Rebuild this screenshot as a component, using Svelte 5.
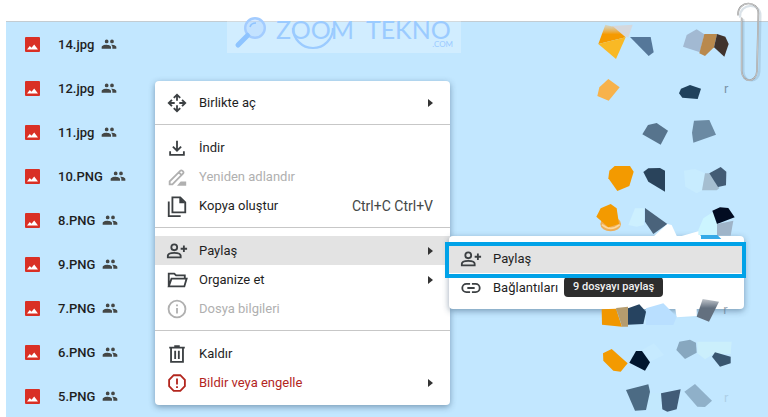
<script>
    const files = ['14.jpg', '12.jpg', '11.jpg', '10.PNG', '8.PNG', '9.PNG', '7.PNG', '6.PNG', '5.PNG'];

    const groups = [
        [{ label: 'Birlikte aç', icon: 'move', sub: true }],
        [
            { label: 'İndir', icon: 'download' },
            { label: 'Yeniden adlandır', icon: 'rename', disabled: true },
            { label: 'Kopya oluştur', icon: 'copy', keys: 'Ctrl+C Ctrl+V' }
        ],
        [
            { label: 'Paylaş', icon: 'share', sub: true, active: true },
            { label: 'Organize et', icon: 'folder', sub: true },
            { label: 'Dosya bilgileri', icon: 'info', disabled: true }
        ],
        [
            { label: 'Kaldır', icon: 'trash' },
            { label: 'Bildir veya engelle', icon: 'report', sub: true, danger: true }
        ]
    ];
</script>

{#snippet icon(name)}
    <svg class="icon" viewBox="0 0 24 24" aria-hidden="true">
        {#if name === 'move'}
            <path d="M12 3v6.500M12 14.500v6.500M3 12h6.500M14.500 12H21M8.500 6.500 12 3l3.500 3.500M8.500 17.500 12 21l3.500-3.500M6.500 8.500 3 12l3.500 3.500M17.500 8.500 21 12l-3.500 3.500" />
        {:else if name === 'download'}
            <path d="M12 4v11M7.500 10.500 12 15l4.500-4.500M4.500 15.500v4h15v-4" />
        {:else if name === 'rename'}
            <path d="M4 20v-3.200L15.500 5.300q1.200-1.200 2.400 0l.6.6q1.200 1.200 0 2.400L7 20zM14 7l3 3" />
            <path class="solid" d="M16 17h6v4.500h-10z" />
        {:else if name === 'copy'}
            <path d="M7 2.500h8.500l5.500 5.500v11H7zM3 7v16h13" />
            <path class="solid" d="M14.500 2v7H21z" />
        {:else if name === 'share'}
            <circle cx="9" cy="8" r="3.200" />
            <path d="M2 19v-1.700C2 15 6 14 9 14s7 1 7 3.300V19zM19.500 6v7M16 9.500h7" />
        {:else if name === 'folder'}
            <path d="M3 19V5h6l2 2h9.500v3M3 19 6 10.500h16.500L20 19z" />
        {:else if name === 'info'}
            <circle cx="12" cy="12" r="9.200" />
            <path d="M12 11v6M12 7v2" />
        {:else if name === 'trash'}
            <path d="M5.500 5.500V20.500h13V5.500M3.500 5h17M9 3.500h6M10 8.500v9M14 8.500v9" />
        {:else if name === 'report'}
            <path d="M8.400 3.500h7.200l5 5v7l-5 5H8.400l-5-5v-7zM12 7v6.500M12 15.500v2" />
        {:else if name === 'link'}
            <path d="M11 7.500H7a4.500 4.500 0 0 0 0 9h4M13 7.500h4a4.500 4.500 0 0 1 0 9h-4M8 12h8" />
        {/if}
    </svg>
{/snippet}

<main class="page">
    <ul class="files">
        {#each files as name}
            <li class="file">
                <svg class="thumb" viewBox="0 0 15 15" aria-hidden="true">
                    <rect width="15" height="15" rx="1" fill="#d93025" />
                    <path d="M2 12.500 4.800 9 6.500 10.800 9.200 7.500 13 12.500z" fill="#fff" />
                </svg>
                <span>{name}</span>
                <svg class="people" viewBox="0 0 24 24" aria-hidden="true">
                    <path d="M16.500 11a2.800 2.800 0 1 0 0-5.600 2.800 2.800 0 0 0 0 5.600zM8.500 11a2.800 2.800 0 1 0 0-5.600 2.800 2.800 0 0 0 0 5.600zM8 13c-2.300 0-7 1.200-7 3.500V19h14v-2.500C15 14.200 10.300 13 8 13zM16 13l-1 .1c1.200.8 2 2 2 3.400V19h6v-2.500c0-2.300-4.700-3.500-7-3.500z" />
                </svg>
            </li>
        {/each}
    </ul>

    <div class="brand">
        <svg class="lens" viewBox="0 0 34 34" aria-hidden="true">
            <circle cx="21" cy="12" r="9.800" fill="#b5d8ff" fill-opacity=".5" stroke="#a3ccff" stroke-width="2.400" />
            <path d="M16 11q1-4 6-4" fill="none" stroke="#8fc3ff" stroke-width="1.600" />
            <path d="M13.500 19.500 4 29" stroke="#8ec4ff" stroke-width="5" stroke-linecap="round" />
        </svg>
        <span class="word">ZOOM</span>
        <span class="word">TEKNO</span>
        <svg class="smile" viewBox="0 0 44 28" aria-hidden="true">
            <path d="M2 4a20 20 0 0 0 40 0" fill="none" stroke="#9bcbff" stroke-width="2.200" />
        </svg>
        <span class="com">.COM</span>
    </div>

    <div class="menu main-menu" role="menu">
        {#each groups as group, i}
            {#if i > 0}<hr />{/if}
            {#each group as item}
                <button role="menuitem" class="item" class:active={item.active} class:danger={item.danger} disabled={item.disabled}>
                    {@render icon(item.icon)}
                    <span class="label">{item.label}</span>
                    {#if item.keys}<span class="keys">{item.keys}</span>{/if}
                    {#if item.sub}<span class="arrow"></span>{/if}
                </button>
            {/each}
        {/each}
    </div>

    <div class="menu sub-menu" role="menu">
        <button role="menuitem" class="item active">
            {@render icon('share')}
            <span class="label">Paylaş</span>
        </button>
        <button role="menuitem" class="item">
            {@render icon('link')}
            <span class="label">Bağlantıları</span>
        </button>
        <div class="tooltip" role="tooltip">9 dosyayı paylaş</div>
        <div class="frame"></div>
    </div>

    <svg class="scraps" viewBox="0 0 564 1251" aria-hidden="true">
        <defs>
            <linearGradient id="flame" x1="0" y1="0" x2="0" y2="1">
                <stop offset="0" stop-color="#f5b050" stop-opacity=".3" />
                <stop offset=".5" stop-color="#f59a00" />
            </linearGradient>
            <linearGradient id="smoke" x1="0" y1="0" x2="0" y2="1">
                <stop offset="0" stop-color="#63707f" stop-opacity=".4" />
                <stop offset=".4" stop-color="#63707f" />
            </linearGradient>
        </defs>
        <path fill="#d9d5d4" d="M95 78 158 74 145 112 130 108z" opacity=".8" />
        <path fill="url(#flame)" d="M55 132 76 74 100 80 137 112z" />
        <path fill="#f9b925" d="M55 132 137 112 108 177z" />
        <path fill="#557799" d="M150 111H212L221 157 206 168z" />
        <path fill="#a2b9d2" d="M309 140 320 105 350 88 373 103 360 157z" />
        <path fill="#b9894d" d="M373 102H411L402 142 375 168 358 160z" />
        <path fill="#40332d" d="M411 102 436 110 446 132 433 170 402 142z" />
        <path fill="#f7b24b" d="M85 237 119 262 86 302 52 288 58 262z" />
        <path fill="#1f415c" d="M297 280 303 266 330 255 363 266 353 297 307 293z" />

        <path fill="#57748d" d="M187 403 204 375 230 369 264 392 242 434z" />
        <path fill="#6b8aa3" d="M342 362 388 360 408 404 340 428 336 398z" />
        <path fill="#f39a00" d="M104 498H150L161 515 148 558 112 573 85 535 88 512z" />
        <path fill="#29435b" d="M190 516 205 505 240 504 255 512V575L205 545z" />
        <path fill="#c8ecff" d="M312 512 345 507 375 520 368 570 350 580 316 560z" />
        <path fill="#a5bed0" d="M375 520H395L418 565 410 571H366z" />
        <path fill="#435c75" d="M388 520 422 501 439 515 438 556 414 561z" />

        <ellipse cx="92" cy="672" rx="31" ry="22" fill="#eeae58" />
        <path d="M66 674q26 22 53 0" fill="none" stroke="#fbd79b" stroke-width="5" />
        <path fill="#f39a00" d="M49 650 62 625 92 612 110 625 117 672 85 682z" />
        <path fill="#cdf0ff" d="M145 675 165 625H192V675L170 680z" />
        <path fill="#4a637b" d="M195 624 262 672 220 702 195 665z" />
        <path fill="#fff" d="M218 712 262 672 275 675 292 712 360 692V712z" />
        <path fill="#ccf5ff" d="M355 690 370 655 400 635 411 672V705H355z" />
        <path fill="#020c22" d="M397 632 420 622 445 624 464 652 411 672z" />
        <path fill="#9fb4c8" d="M411 672 460 662 452 707H411z" />
        <path fill="#35aae8" d="M363 705H412L424 717H363z" />

        <path fill="#fff" d="M285 920H350V948L290 952z" />
        <path fill="#b9dfff" d="M198 925 250 910 290 950 280 975H198z" />
        <path fill="#f19700" d="M65 928 108 926 126 980 66 974z" />
        <path fill="#b59c6e" d="M108 924 144 920V980H126z" />
        <path fill="#264360" d="M144 925 178 913 198 935 190 972 144 974z" />
        <path fill="url(#smoke)" d="M368 897 417 905 387 965 350 950z" />

        <path fill="#c6eaff" d="M186 1050 222 1030 252 1065 210 1085z" />
        <path fill="#f39a00" d="M69 1060 95 1047 143 1090 122 1115 100 1112 70 1082z" />
        <path fill="#00152e" d="M148 1088 168 1053H186L210 1087 195 1112z" />
        <path fill="#87a7bf" d="M289 1050 298 1025 330 1019 348 1028 350 1058 315 1077z" />
        <path fill="#cbeffc" d="M352 1025H455L452 1062H400L375 1078 352 1060z" />
        <path fill="#395670" d="M396 1070 405 1057 452 1070V1090L420 1100z" />
        <path fill="#c2e8fd" d="M208 1178H243V1230H200z" />
        <path fill="#4c6b84" d="M138 1170 205 1153 210 1175 198 1230 165 1232z" />
        <path fill="#415b77" d="M243 1180 302 1168 290 1228 262 1235 247 1228z" />
        <path fill="#8fb0c9" d="M313 1175 345 1152 396 1202 375 1221 352 1220z" />

        <g fill="#5c7184" font-size="39">
            <text x="432" y="279" opacity=".7">r</text>
            <text x="430" y="942" opacity=".6">r</text>
            <text x="432" y="1206" opacity=".2">r</text>
        </g>

        <g fill="none" stroke-linecap="round">
            <path stroke="#6d8ca5" stroke-opacity=".25" stroke-width="7" d="M480 50C480 8 541 8 541 45L538 215C536 250 492 250 490 215V60" />
            <path stroke="#999" stroke-width="5" d="M474 44C474 0 535 0 535 40L531 213C529 250 487 250 485 213V55" />
            <path stroke="#ddd" stroke-width="2" d="M474 44C474 0 535 0 535 40L531 213C529 250 487 250 485 213V55" />
        </g>
    </svg>
</main>

<style>
    :global(body) {
        margin: 0;
        background: #fff;
        font-family: Roboto, "Liberation Sans", sans-serif;
    }

    .page {
        position: relative;
        box-sizing: border-box;
        height: 100vh;
        padding: 21px 0 0 6px;
        overflow: hidden;
    }

    .files {
        margin: 0;
        padding: 0;
        list-style: none;
        background: #c2e7ff;
        border-top: 1px solid #c3ccd2;
    }

    .file {
        display: flex;
        align-items: center;
        gap: 7px;
        height: 44px;
        padding-left: 19px;
        font-size: 13px;
        font-weight: 500;
        color: #1f1f1f;
    }

    .thumb {
        width: 15px;
        height: 15px;
        margin-right: 11px;
    }

    .people {
        width: 16px;
        height: 16px;
        fill: #444746;
    }

    .brand {
        position: absolute;
        top: 12px;
        left: 227px;
        display: flex;
        align-items: center;
        box-sizing: border-box;
        width: 234px;
        height: 41px;
        padding: 0 8px 7px 5px;
        gap: 12px;
        background: rgba(255, 255, 255, 0.25);
        color: #9bcbff;
        font-family: Lato, sans-serif;
    }

    .lens {
        width: 34px;
        height: 34px;
        margin: 7px -4px 0 2px;
    }

    .word {
        font-size: 25px;
        line-height: 18px;
    }

    .smile {
        position: absolute;
        left: 64px;
        top: 12px;
        width: 44px;
        height: 28px;
    }

    .com {
        position: absolute;
        right: 8px;
        bottom: 5px;
        font-size: 8px;
        line-height: 8px;
    }

    .menu {
        position: absolute;
        box-sizing: border-box;
        width: 295px;
        background: #fff;
        border-radius: 4px;
        box-shadow: 0 2px 6px rgba(30, 60, 90, 0.45);
    }

    .main-menu {
        top: 81px;
        left: 155px;
        padding: 7px 0 8px;
    }

    .sub-menu {
        top: 236px;
        left: 449px;
        padding: 8px 0 7px;
    }

    hr {
        height: 1px;
        margin: 7px 0 8px;
        border: 0;
        background: #c7c7c7;
    }

    .item {
        display: flex;
        align-items: center;
        gap: 11px;
        width: 100%;
        height: 29px;
        padding: 0 17px 0 11px;
        border: 0;
        background: none;
        color: #1f1f1f;
        font: 13px Roboto, "Liberation Sans", sans-serif;
        text-align: left;
    }

    .item.active {
        background: #e3e3e3;
    }

    .item:disabled {
        color: #b0b0b0;
    }

    .item.danger {
        color: #b3261e;
    }

    .label {
        flex: 1;
    }

    .keys {
        color: #444746;
        font-size: 14px;
    }

    .arrow {
        border: 4px solid transparent;
        border-left: 5px solid #333;
        border-right: 0;
    }

    .icon {
        width: 22px;
        height: 22px;
        fill: none;
        stroke: #3c4043;
        stroke-width: 2;
    }

    .icon .solid {
        fill: #3c4043;
        stroke: none;
    }

    .item:disabled .icon {
        stroke: #b0b0b0;
    }

    .item:disabled .solid {
        fill: #b0b0b0;
    }

    .danger .icon {
        stroke: #b3261e;
    }

    .tooltip {
        position: absolute;
        top: 41px;
        left: 115px;
        padding: 0 9px;
        border-radius: 4px;
        background: #2d2d2d;
        color: #f2f2f2;
        font-size: 11px;
        font-weight: 500;
        line-height: 20px;
        white-space: nowrap;
    }

    .frame {
        position: absolute;
        top: 6px;
        left: -4px;
        right: -2px;
        box-sizing: border-box;
        height: 36px;
        border: 4px solid #00a2e8;
    }

    .scraps {
        position: absolute;
        top: 0;
        right: 0;
        width: 188px;
        height: 417px;
        pointer-events: none;
    }
</style>
